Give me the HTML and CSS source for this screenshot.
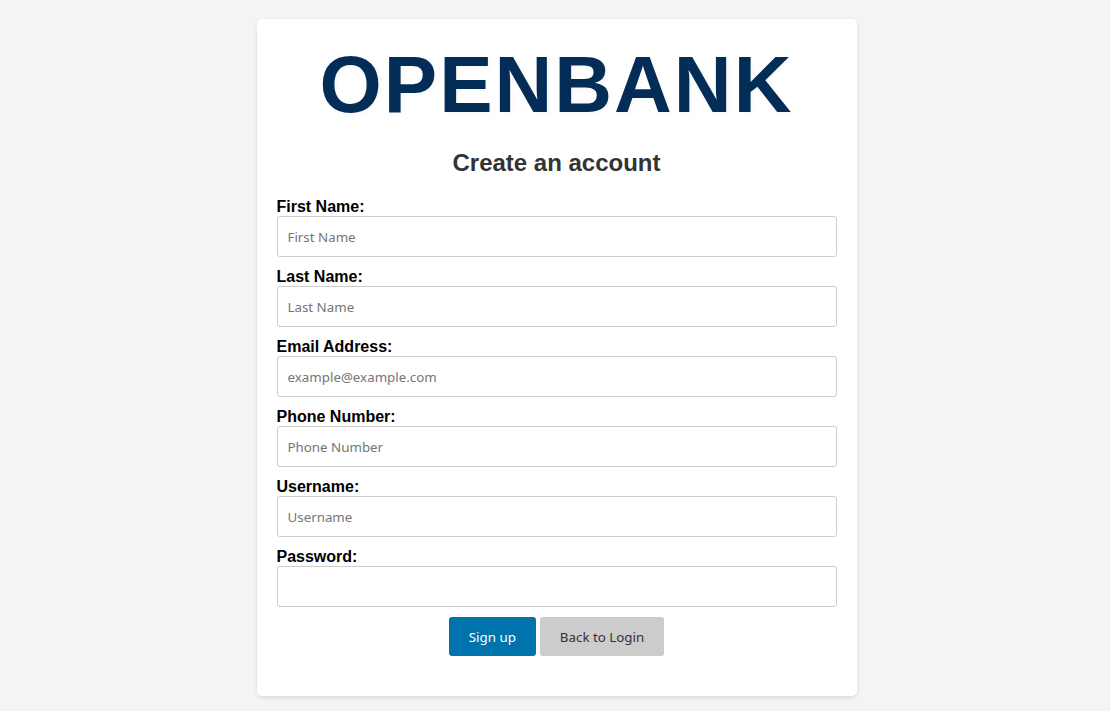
FILE: index.html
```html
<!DOCTYPE html>
<html lang="en">
<head>
<meta charset="utf-8">
<meta name="viewport" content="width=device-width, initial-scale=1">
<title>Openbank - Create an account</title>
<link rel="stylesheet" href="styles.css">
</head>
<body>
<main class="card">
  <h1 class="brand">OPENBANK</h1>
  <h2 class="title">Create an account</h2>
  <form class="form">
    <div class="field">
      <label class="label" for="first-name">First Name:</label>
      <input class="input" type="text" id="first-name" placeholder="First Name">
    </div>
    <div class="field">
      <label class="label" for="last-name">Last Name:</label>
      <input class="input" type="text" id="last-name" placeholder="Last Name">
    </div>
    <div class="field">
      <label class="label" for="email">Email Address:</label>
      <input class="input" type="email" id="email" placeholder="example@example.com">
    </div>
    <div class="field">
      <label class="label" for="phone">Phone Number:</label>
      <input class="input" type="tel" id="phone" placeholder="Phone Number">
    </div>
    <div class="field">
      <label class="label" for="username">Username:</label>
      <input class="input" type="text" id="username" placeholder="Username">
    </div>
    <div class="field">
      <label class="label" for="password">Password:</label>
      <input class="input" type="password" id="password">
    </div>
    <div class="actions">
      <button class="button button-primary" type="submit">Sign up</button>
      <button class="button button-secondary" type="button">Back to Login</button>
    </div>
  </form>
</main>
</body>
</html>
```
FILE: styles.css
```css
* {
  box-sizing: border-box;
}

body {
  margin: 0;
  padding: 19px 0 15px 3px;
  background: #f4f4f4;
  font-family: "Liberation Sans", Arial, sans-serif;
  font-size: 16px;
  line-height: 19px;
}

.card {
  width: 90%;
  max-width: 600px;
  margin: 0 auto;
  padding: 20px 20px 40px;
  background: #fff;
  border-radius: 5px;
  box-shadow: 0 2px 5px rgba(0, 0, 0, 0.1);
}

.brand {
  margin: 0;
  color: #032d57;
  font-size: 80px;
  line-height: 92px;
  letter-spacing: 2px;
  text-align: center;
  text-shadow: 2px 2px 4px rgba(0, 0, 0, 0.03);
}

.title {
  margin: 18px 0 20px;
  color: #333;
  font-size: 24px;
  line-height: 28px;
  text-align: center;
}

.form {
  display: grid;
  gap: 10px;
}

.field {
  display: grid;
}

.label {
  font-weight: bold;
}

.input {
  width: 100%;
  height: 41px;
  padding: 10px;
  border: 1px solid #ccc;
  border-radius: 3px;
  background: #fff;
  font-family: "Noto Sans", sans-serif;
}

.actions {
  display: flex;
  flex-wrap: wrap;
  justify-content: center;
  gap: 4px;
}

.button {
  padding: 11px 20px 10px;
  border: 0;
  border-radius: 3px;
  font-family: "Noto Sans", sans-serif;
  line-height: 18px;
  cursor: pointer;
}

.button-primary {
  background: #0072ac;
  color: #fff;
}

.button-secondary {
  background: #ccc;
  color: #333;
}
```
